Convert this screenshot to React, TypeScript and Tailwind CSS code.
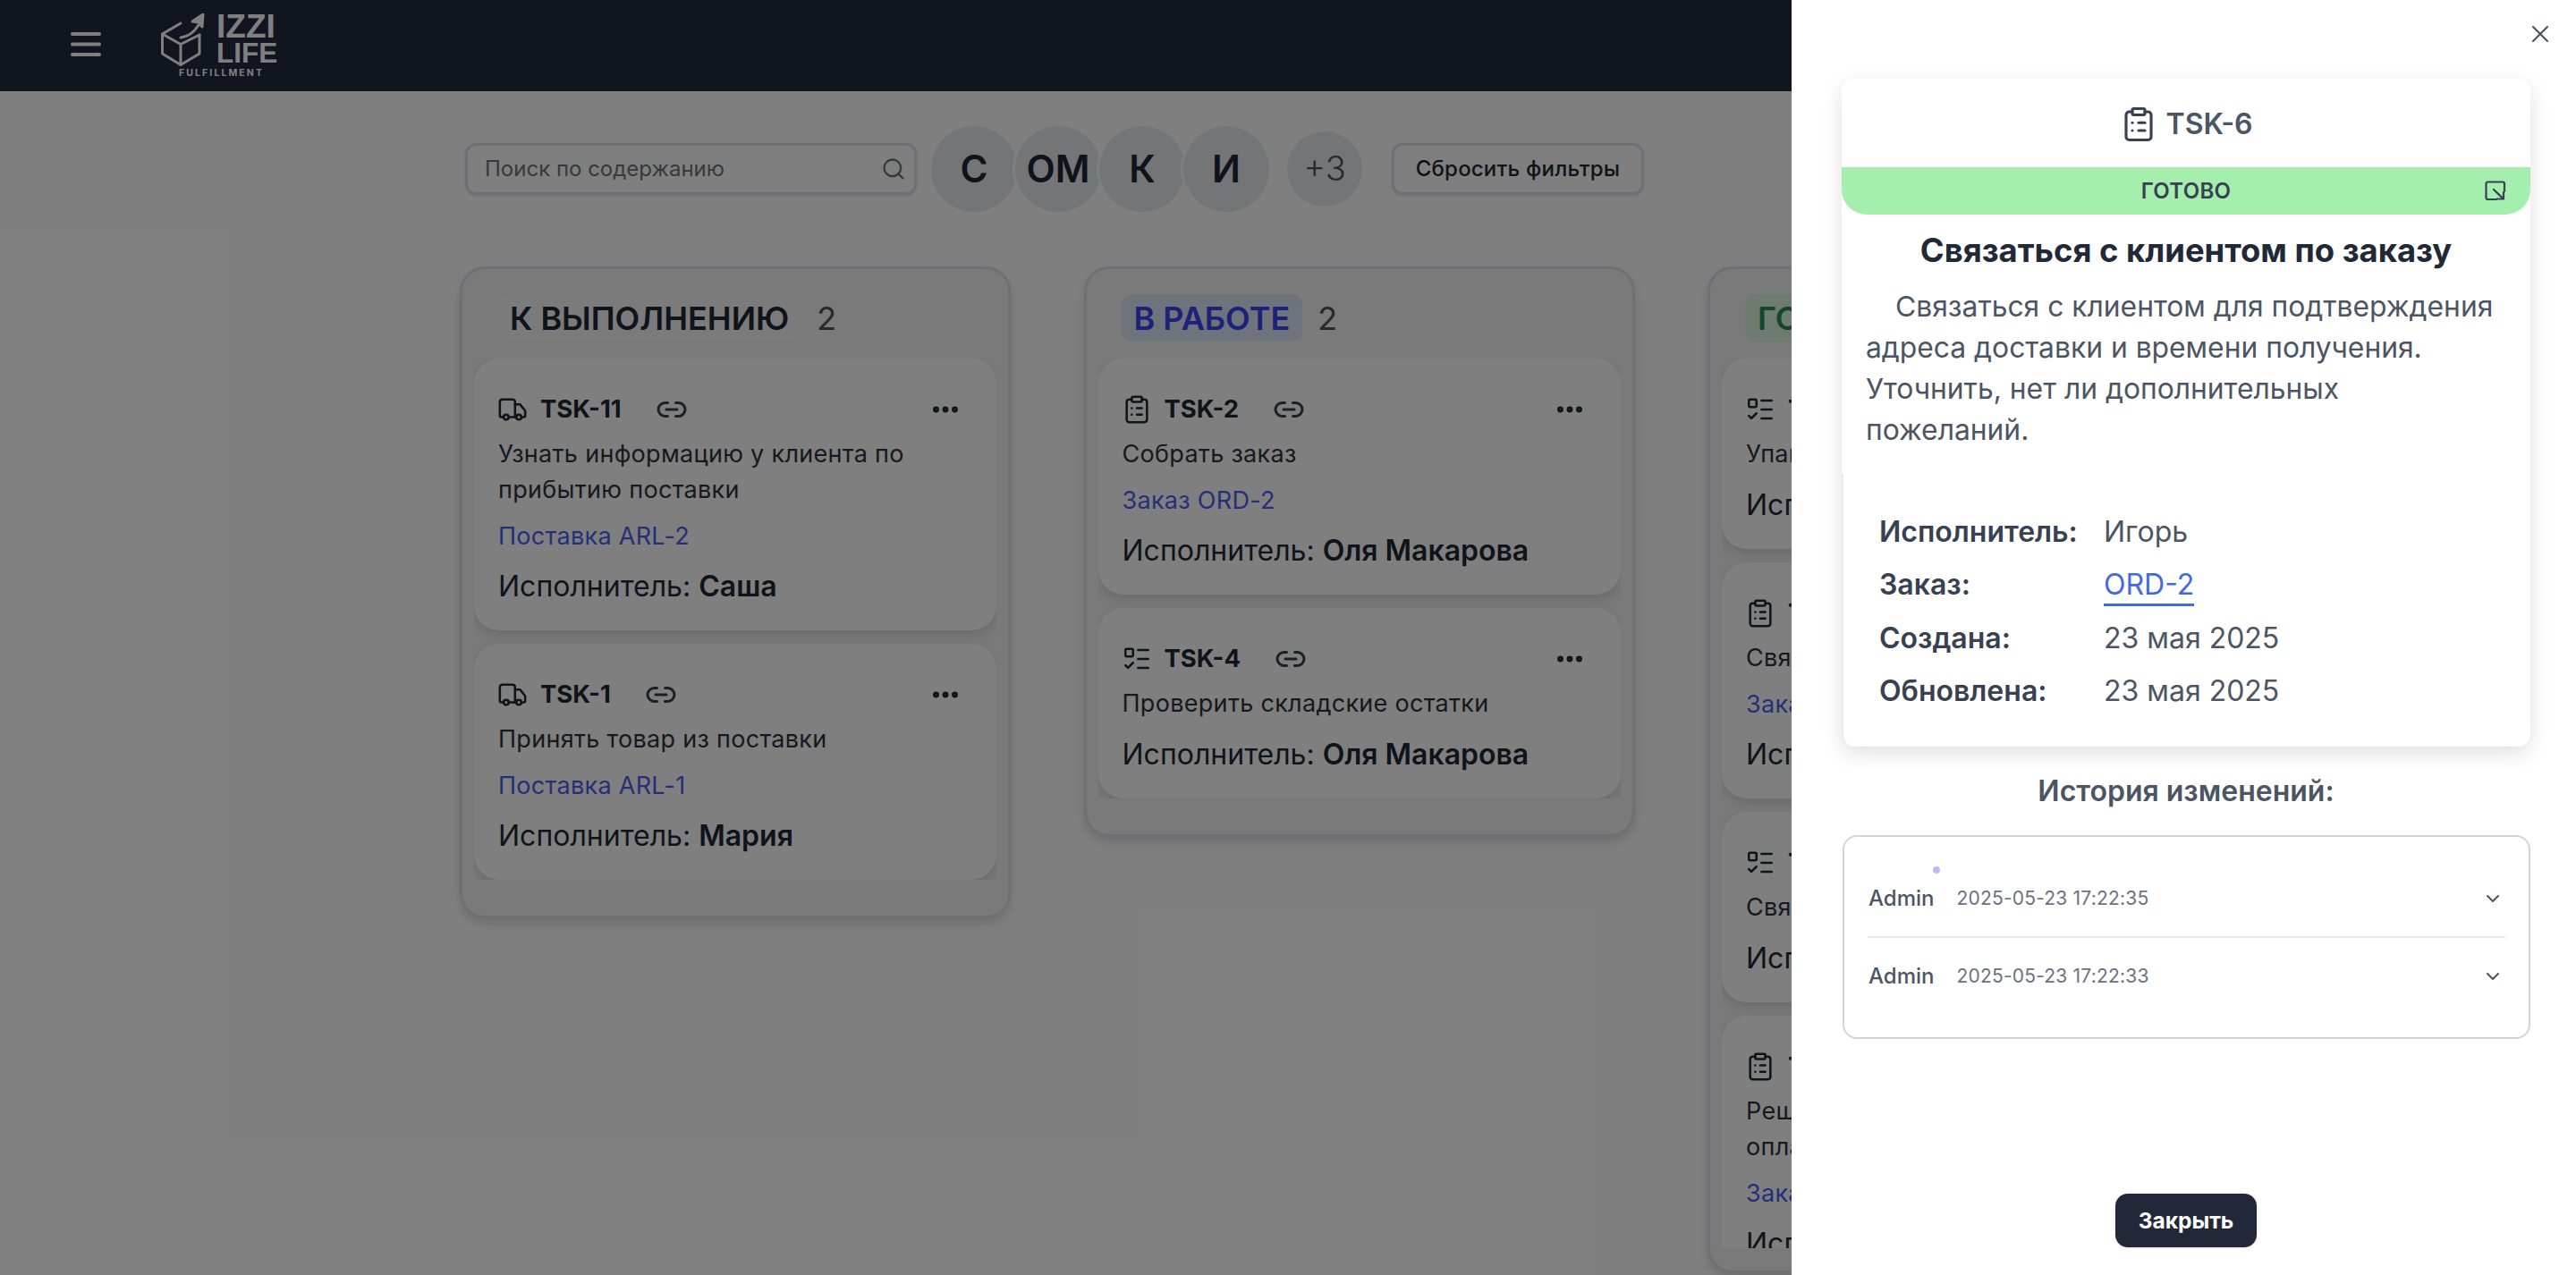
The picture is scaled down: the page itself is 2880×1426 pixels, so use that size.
import { Truck, ClipboardList, ListTodo, Link2, Ellipsis, Search, X, ChevronDown } from "lucide-react";

type Task = { id: string; icon: "truck" | "clip" | "todo"; text: string; link?: string; who: string };

const ICONS = { truck: Truck, clip: ClipboardList, todo: ListTodo };

function TaskCard({ t }: { t: Task }) {
  const I = ICONS[t.icon];
  return (
    <div className="shrink-0 w-[584px] rounded-[28px] bg-white shadow-[0_6px_14px_rgba(0,0,0,0.12)] px-[27px] pt-[39px] pb-[27px]">
      <div className="flex items-center h-[36px] text-[#1f2937]">
        <I size={34} strokeWidth={1.8} className="shrink-0 -ml-[1px]" />
        <span className="ml-[14px] text-[27.5px] font-bold">{t.id}</span>
        <Link2 size={36} strokeWidth={2} className="ml-[38px] text-[#374151]" />
        <Ellipsis size={36} strokeWidth={2.6} className="ml-auto mr-[12px]" />
      </div>
      <p className="mt-[12px] text-[27px] leading-[40px] text-[#2c3340] tracking-[0.3px]">{t.text}</p>
      {t.link && <p className="mt-[13px] text-[27px] leading-[38px] text-[#4a5ff0] tracking-[0.3px]">{t.link}</p>}
      <p className="mt-[15px] text-[32px] leading-[44px] text-[#1f2937]">
        Исполнитель: <b className="font-semibold">{t.who}</b>
      </p>
    </div>
  );
}

function Column({ title, count, badge, tasks, tall }: { title: string; count: number; badge: string; tasks: Task[]; tall?: boolean }) {
  return (
    <div className={`shrink-0 w-[616px] ${tall ? "h-[1126px] pb-[25px]" : "pb-[40px]"} rounded-[28px] border-[3px] border-[#e0e1e8] bg-[#f4f4f4] shadow-[0_6px_12px_rgba(0,0,0,0.14)] pt-[28px] px-[13px] flex flex-col`}>
      <div className="flex items-center h-[53px] ml-[26px] mb-[19px]">
        <span className={`h-[53px] flex items-center rounded-[12px] px-[14px] text-[36px] font-semibold ${badge}`}>{title}</span>
        <span className="ml-[17px] text-[36px] text-[#4b5563]">{count}</span>
      </div>
      <div className="flex flex-col gap-[15px] overflow-hidden">
        {tasks.map((t) => <TaskCard key={t.id} t={t} />)}
      </div>
    </div>
  );
}

const Avatar = ({ c }: { c: string }) => (
  <div className="w-[96px] h-[96px] -ml-[2px] first:ml-0 rounded-full bg-[#e7eaee] ring-[3px] ring-white flex items-center justify-center text-[42px] font-semibold text-[#1f2937]">{c}</div>
);

const todo: Task[] = [
  { id: "TSK-11", icon: "truck", text: "Узнать информацию у клиента по прибытию поставки", link: "Поставка ARL-2", who: "Саша" },
  { id: "TSK-1", icon: "truck", text: "Принять товар из поставки", link: "Поставка ARL-1", who: "Мария" },
];
const work: Task[] = [
  { id: "TSK-2", icon: "clip", text: "Собрать заказ", link: "Заказ ORD-2", who: "Оля Макарова" },
  { id: "TSK-4", icon: "todo", text: "Проверить складские остатки", who: "Оля Макарова" },
];
const done: Task[] = [
  { id: "TSK-3", icon: "todo", text: "Упаковать заказ", who: "Оля Макарова" },
  { id: "TSK-6", icon: "clip", text: "Связаться с клиентом по заказу", link: "Заказ ORD-2", who: "Игорь" },
  { id: "TSK-5", icon: "todo", text: "Связаться с поставщиком", who: "Мария" },
  { id: "TSK-7", icon: "clip", text: "Решить вопрос о подтверждении оплаты заказа", link: "Заказ ORD-1", who: "Саша" },
];

const Meta = ({ k, children }: { k: string; children: React.ReactNode }) => (
  <div className="flex items-center h-[59.5px] text-[32px]">
    <span className="w-[251px] font-semibold text-[#374151]">{k}</span>
    <span className="text-[#4b5563]">{children}</span>
  </div>
);

const Hist = ({ d, border }: { d: string; border?: boolean }) => (
  <div className={`flex items-center ${border ? "h-[87px] border-b-2 border-[#e5e7eb]" : "h-[85px]"}`}>
    <span className="ml-[1px] text-[24px] font-medium text-[#4b5563]">Admin</span>
    <span className="ml-[25px] text-[21px] tracking-[0.2px] text-[#6b7280]">{d}</span>
    <ChevronDown size={24} className="ml-auto mr-[2px] text-[#4b5563]" />
  </div>
);

export default function App() {
  return (
    <div className="relative w-[2880px] h-[1426px] overflow-hidden bg-white font-['Inter',sans-serif]">
      <header className="h-[102px] bg-[#222a3e] flex items-center">
        <svg width="34" height="27" viewBox="0 0 34 27" className="ml-[79px] -mt-[4px]" fill="none" stroke="#fff" strokeWidth="4" strokeLinecap="round">
          <path d="M2 2h30M2 13.5h30M2 25h30" />
        </svg>
        <div className="ml-[67px] flex flex-col items-start">
          <div className="flex items-start">
            <svg width="50" height="60" viewBox="0 0 50 60" fill="none" stroke="#fff" strokeWidth="3" strokeLinejoin="round" strokeLinecap="round">
              <path d="M22 11 1.5 23v22L22 57.5 43 45V24" />
              <path d="M1.5 23 22 34.5 43 24M22 34.5v23" />
              <path d="M22 27c8-1 15-6 20-14" />
              <path d="M35 9 47 1l-1 14-4-5z" fill="#fff" />
            </svg>
            <div className="ml-[12px] flex flex-col font-['Liberation_Sans',sans-serif] font-bold text-white">
              <span className="text-[37px] leading-[30px]">IZZI</span>
              <span className="text-[31.5px] leading-[29px]">LIFE</span>
            </div>
          </div>
          <span className="ml-[20px] mt-[1px] text-[10.5px] leading-[12px] font-bold tracking-[2.1px] text-white">FULFILLMENT</span>
        </div>
      </header>

      <main className="pl-[514px]">
        <div className="flex items-center h-[97px] mt-[38px] ml-[6px]">
          <div className="w-[505px] h-[58px] rounded-[12px] border-[3px] border-[#e0e1e8] bg-white shadow-sm flex items-center pl-[19px] pr-[9px]">
            <span className="text-[24px] text-[#6b7280]">Поиск по содержанию</span>
            <Search size={28} className="ml-auto text-[#6b7280]" />
          </div>
          <div className="ml-[16px] flex items-center">
            <Avatar c="С" />
            <Avatar c="ОМ" />
            <Avatar c="К" />
            <Avatar c="И" />
          </div>
          <div className="ml-[20px] w-[84px] h-[84px] rounded-full bg-[#e7eaee] flex items-center justify-center text-[38px] font-light text-[#4b5563]">+3</div>
          <div className="ml-[33px] w-[282px] h-[58px] rounded-[12px] border-[3px] border-[#e0e1e8] bg-white shadow-sm flex items-center justify-center text-[24px] tracking-[0.2px] font-medium text-[#1f2937]">Сбросить фильтры</div>
        </div>
        <div className="flex items-start gap-[81.5px] mt-[61px]">
          <Column title="К ВЫПОЛНЕНИЮ" count={2} badge="bg-[#f7f7f7] text-[#1f2937]" tasks={todo} />
          <Column title="В РАБОТЕ" count={2} badge="bg-[#dde6f8] text-[#3a44f0]" tasks={work} />
          <Column title="ГОТОВО" count={4} badge="bg-[#dcf7e3] text-[#2a8a5c]" tasks={done} tall />
        </div>
      </main>

      <div className="absolute inset-0 bg-black/50" />

      <aside className="absolute top-0 right-0 bottom-0 w-[877px] bg-white flex flex-col">
        <X size={32} strokeWidth={1.6} className="absolute top-[22px] right-[24px] text-[#4b5563]" />
        <div className="mt-[88px] ml-[56px] w-[770px] rounded-[14px] shadow-[0_8px_24px_rgba(0,0,0,0.12)]">
          <div className="h-[99px] pt-[2px] flex items-center justify-center text-[#4b5563]">
            <ClipboardList size={42} strokeWidth={1.8} className="text-[#374151]" />
            <span className="ml-[10px] text-[32px] font-semibold">TSK-6</span>
          </div>
          <div className="relative h-[53px] bg-[#a5efae] rounded-b-[28px] flex items-center justify-center text-[24px] font-semibold tracking-[0.3px] text-[#374151]">
            ГОТОВО
            <svg width="24" height="23" viewBox="0 0 24 23" fill="none" stroke="#374151" strokeWidth="2.2" strokeLinecap="round" strokeLinejoin="round" className="absolute right-[27px] top-[15px]">
              <path d="M22 12V3.5a2 2 0 0 0-2-2H3.5a2 2 0 0 0-2 2V19a2 2 0 0 0 2 2H13" />
              <path d="M10 10l11 10.5M21 13v7.5h-7" />
            </svg>
          </div>
          <h2 className="mt-[18px] text-center text-[36.4px] leading-[44px] font-bold text-[#1f2937]">Связаться с клиентом по заказу</h2>
          <p className="mt-[18px] px-[27px] indent-[33px] text-[31.8px] leading-[46px] text-[#4b5563]">
            Связаться с клиентом для подтверждения адреса доставки и времени получения. Уточнить, нет ли дополнительных пожеланий.
          </p>
          <div className="mt-[26px] border-l-2 border-[#e8ebf0] rounded-bl-[14px] pl-[40px] pt-[35px] pb-[32px]">
            <Meta k="Исполнитель:">Игорь</Meta>
            <Meta k="Заказ:"><span className="text-[#4169e1] border-b-[3px] border-[#4169e1] pb-[2px]">ORD-2</span></Meta>
            <Meta k="Создана:">23 мая 2025</Meta>
            <Meta k="Обновлена:">23 мая 2025</Meta>
          </div>
        </div>
        <h3 className="mt-[31px] ml-[56px] w-[770px] text-center text-[32px] leading-[38px] font-semibold text-[#4b5563]">История изменений:</h3>
        <div className="relative mt-[30px] ml-[57px] w-[769px] h-[228px] rounded-[16px] border-2 border-[#d1d5db] px-[26px] pt-[26px]">
          <span className="absolute left-[99px] top-[33px] w-[8px] h-[8px] rounded-full bg-[#c4b5fd]" />
          <Hist d="2025-05-23 17:22:35" border />
          <Hist d="2025-05-23 17:22:33" />
        </div>
        <div className="mt-auto mb-[31px] ml-[362px] w-[158px] h-[60px] rounded-[14px] bg-[#222839] shadow-sm flex items-center justify-center text-[24.5px] font-bold text-white">Закрыть</div>
      </aside>
    </div>
  );
}
